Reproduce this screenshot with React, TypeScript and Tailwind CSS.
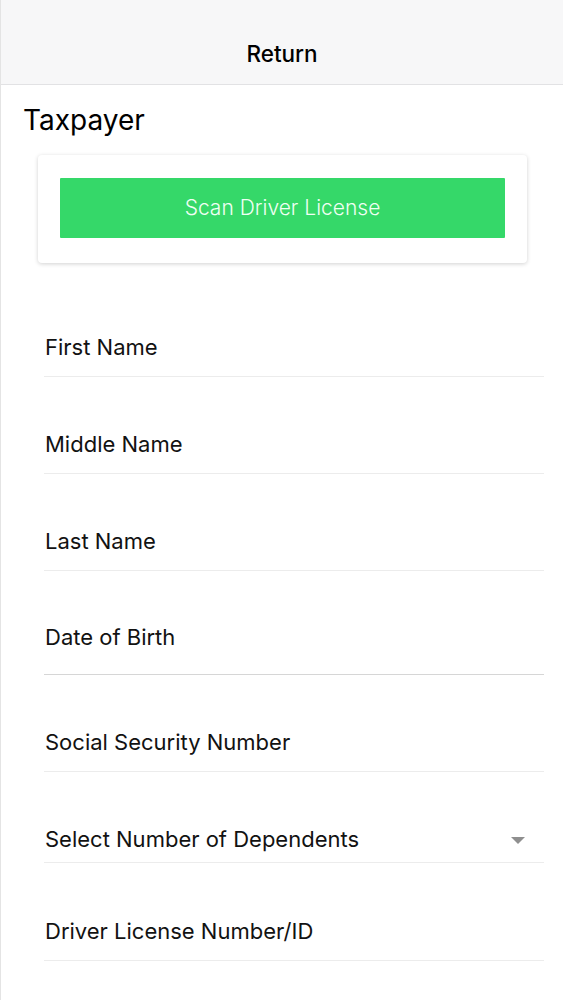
const fields: { label: string; pt: string; pb: string; line: string; select?: boolean }[] = [
  { label: 'First Name', pt: 'pt-[70px]', pb: 'pb-[15px]', line: 'border-[#ececec]' },
  { label: 'Middle Name', pt: 'pt-[53px]', pb: 'pb-[15px]', line: 'border-[#ececec]' },
  { label: 'Last Name', pt: 'pt-[53px]', pb: 'pb-[15px]', line: 'border-[#ececec]' },
  { label: 'Date of Birth', pt: 'pt-[52px]', pb: 'pb-[23px]', line: 'border-[#d6d6d6]' },
  { label: 'Social Security Number', pt: 'pt-[53px]', pb: 'pb-[15px]', line: 'border-[#ececec]' },
  { label: 'Select Number of Dependents', pt: 'pt-[53px]', pb: 'pb-[9px]', line: 'border-[#ececec]', select: true },
  { label: 'Driver License Number/ID', pt: 'pt-[54px]', pb: 'pb-[15px]', line: 'border-[#ececec]' },
]

export default function App() {
  return (
    <div
      className="min-h-[1000px] bg-white border-l border-[#e4e4e4] text-[#121212]"
      style={{ fontFamily: 'Inter, "Liberation Sans", sans-serif' }}
    >
      <header className="h-[85px] pt-6 flex items-center justify-center bg-[#f7f7f8] border-b border-[#e2e2e4]">
        <span className="text-[22.5px] font-medium text-black">Return</span>
      </header>

      <h1 className="mt-[18px] ml-[22px] text-[28px] leading-[34px] font-normal text-black">Taxpayer</h1>

      <div className="mt-[18px] ml-[37px] mr-[36px] bg-white rounded-sm shadow-[0_1px_4px_rgba(0,0,0,0.18)] pt-[23px] pb-[25px] px-[22px]">
        <button
          type="button"
          className="w-full h-[60px] bg-[#35d869] text-[#effff3] text-[21px] font-light rounded-[1px]"
        >
          Scan Driver License
        </button>
      </div>

      <div className="ml-[43px] mr-[19px]">
        {fields.map((f) => (
          <div key={f.label} className={`${f.pt} ${f.pb} border-b ${f.line}`}>
            <div className="flex items-center justify-between h-[28px] pl-[1px]">
              <span className="text-[22px] leading-[28px]">{f.label}</span>
              {f.select && (
                <svg width="14" height="8" viewBox="0 0 14 8" className="mr-[19px] mt-1">
                  <path d="M0 0 L14 0 L7 7 Z" fill="#8f8f8f" />
                </svg>
              )}
            </div>
          </div>
        ))}
      </div>
    </div>
  )
}
